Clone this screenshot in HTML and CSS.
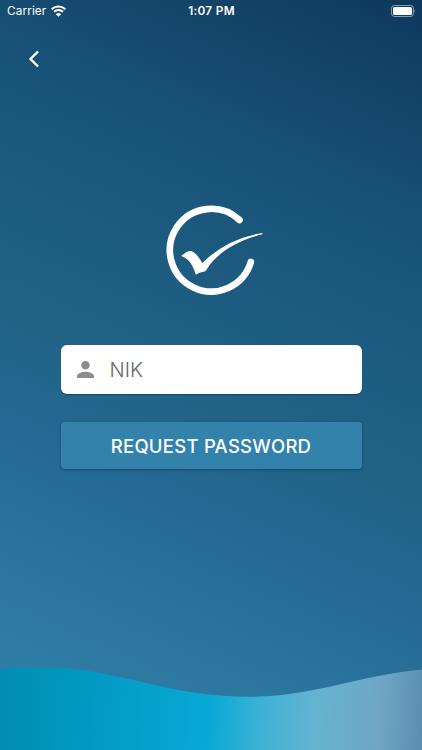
FILE: index.html
```html
<!DOCTYPE html>
<html lang="en">
<head>
<meta charset="utf-8">
<meta name="viewport" content="width=device-width, initial-scale=1">
<title>Request Password</title>
<link rel="stylesheet" href="styles.css">
</head>
<body>
<div class="screen">
  <header class="status">
    <div class="status-left">
      <span class="carrier">Carrier</span>
      <svg class="wifi" viewBox="0 0 45 36" aria-hidden="true">
        <g fill="none" stroke="#fff" stroke-width="6">
          <path d="M2 12.500 A30 30 0 0 1 43 12.500"/>
          <path d="M9 20.500 A19.500 19.500 0 0 1 36 20.500"/>
        </g>
        <path fill="#fff" d="M14.500 27.500 Q22.500 20.500 30.500 27.500 L22.500 35.500Z"/>
      </svg>
    </div>
    <span class="time">1:07 PM</span>
    <svg class="battery" viewBox="0 0 25 12" aria-hidden="true">
      <rect x=".5" y=".5" width="22" height="11" rx="3" fill="none" stroke="#fff" stroke-opacity=".5"/>
      <rect x="2" y="2" width="19" height="8" rx="1.600" fill="#fff"/>
      <path d="M23.600 4.200 Q25 6 23.600 7.800Z" fill="#fff" fill-opacity=".6"/>
    </svg>
  </header>
  <nav class="nav">
    <button class="back" aria-label="Back">
      <svg viewBox="0 0 12 18" aria-hidden="true"><path d="M10 1.500 L2.500 9 L10 16.500" fill="none" stroke="#fff" stroke-width="2.400"/></svg>
    </button>
  </nav>
  <main class="content">
    <svg class="logo" viewBox="-1.500 0 360 330" aria-hidden="true">
      <path d="M252 75 A124 124 0 1 0 286 201" fill="none" stroke="#fff" stroke-width="20" stroke-linecap="round"/>
      <path fill="#fff" d="M77 183 L94 170 Q101 167 108 168 C122 175 132 188 140 205 C183 160 245 126 320 114 L321 118 C247 136 184 174 155 221 Q152 229 144 230 Q130 232 121 239 C112 210 101 191 77 183Z"/>
    </svg>
    <label class="field">
      <svg class="person" viewBox="4 4 16 16" aria-hidden="true"><path fill="#8c8c8c" d="M12 12c2.210 0 4-1.790 4-4s-1.790-4-4-4-4 1.790-4 4 1.790 4 4 4zm0 2c-2.670 0-8 1.340-8 4v2h16v-2c0-2.660-5.330-4-8-4z"/></svg>
      <input class="input" type="text" placeholder="NIK">
    </label>
    <button class="submit">REQUEST PASSWORD</button>
  </main>
  <svg class="wave" viewBox="0 0 422 84" aria-hidden="true">
    <defs>
      <linearGradient id="sea" gradientUnits="userSpaceOnUse" x1="0" y1="16" x2="422" y2="44">
        <stop offset="0" stop-color="#008db3"/>
        <stop offset=".25" stop-color="#039bc4"/>
        <stop offset=".5" stop-color="#08a9d6"/>
        <stop offset=".62" stop-color="#3cb2d5"/>
        <stop offset=".75" stop-color="#65b3d1"/>
        <stop offset=".9" stop-color="#6fa6c5"/>
        <stop offset="1" stop-color="#5b8fb2"/>
      </linearGradient>
    </defs>
    <path fill="url(#sea)" d="M0 3 C14 1.300 28 1 45 1.200 C118 2 165 31 252 30.800 C315 30 360 9 422 3.500 V84 H0Z"/>
  </svg>
</div>
</body>
</html>
```
FILE: styles.css
```css
* { box-sizing: border-box; }
body {
  margin: 0;
  font-family: Inter, "Liberation Sans", sans-serif;
  color: #fff;
}
.screen {
  width: 422px;
  height: 750px;
  overflow: hidden;
  display: flex;
  flex-direction: column;
  background: linear-gradient(204deg, #0e385d 0%, #185177 24%, #1c597f 36%, #216286 52%, #246a94 66%, #2b769f 80%, #2f7da5 91%, #3283ab 100%);
}
.status {
  display: grid;
  grid-template-columns: 1fr auto 1fr;
  align-items: center;
  height: 22px;
  padding: 0 6px 0 7px;
  line-height: 22px;
}
.status-left { display: flex; align-items: center; gap: 5px; }
.carrier { width: 39px; font-size: 11.800px; letter-spacing: .1px; }
.wifi { width: 15px; height: 12px; }
.time { font-size: 11.800px; font-weight: 600; letter-spacing: .3px; }
.battery { width: 25px; height: 12px; justify-self: end; }
.nav { height: 74px; padding: 28px 0 0 28px; }
.back {
  display: block;
  padding: 0;
  border: 0;
  background: none;
}
.back svg { display: block; width: 12px; height: 18px; }
.content {
  display: flex;
  flex-direction: column;
  align-items: center;
  padding: 99px 60px 0;
}
.logo { width: 120px; height: 110px; margin-left: 8px; }
.field {
  display: flex;
  align-items: center;
  gap: 16px;
  width: 301px;
  height: 49.500px;
  margin-top: 39.500px;
  padding: 0 16px;
  border-radius: 6px;
  background: #fff;
  box-shadow: 0 1px 1px rgba(0, 25, 50, .4);
}
.person { flex: none; width: 17px; height: 17px; }
.input {
  min-width: 0;
  flex: 1;
  padding: 2px 0 0;
  border: 0;
  outline: 0;
  background: none;
  font: 350 20px/26px Inter, "Liberation Sans", sans-serif;
}
.input::placeholder { color: #666; opacity: 1; }
.submit {
  width: 301px;
  height: 47px;
  margin-top: 28px;
  padding: 2px 0 0;
  border: 0;
  border-radius: 4px;
  background: #3282ac;
  box-shadow: 0 1px 3px rgba(0, 25, 50, .4);
  color: #fff;
  font: 450 18.500px/45px Inter, "Liberation Sans", sans-serif;
  letter-spacing: .25px;
}
.wave { display: block; width: 422px; height: 84px; margin-top: auto; }
```
